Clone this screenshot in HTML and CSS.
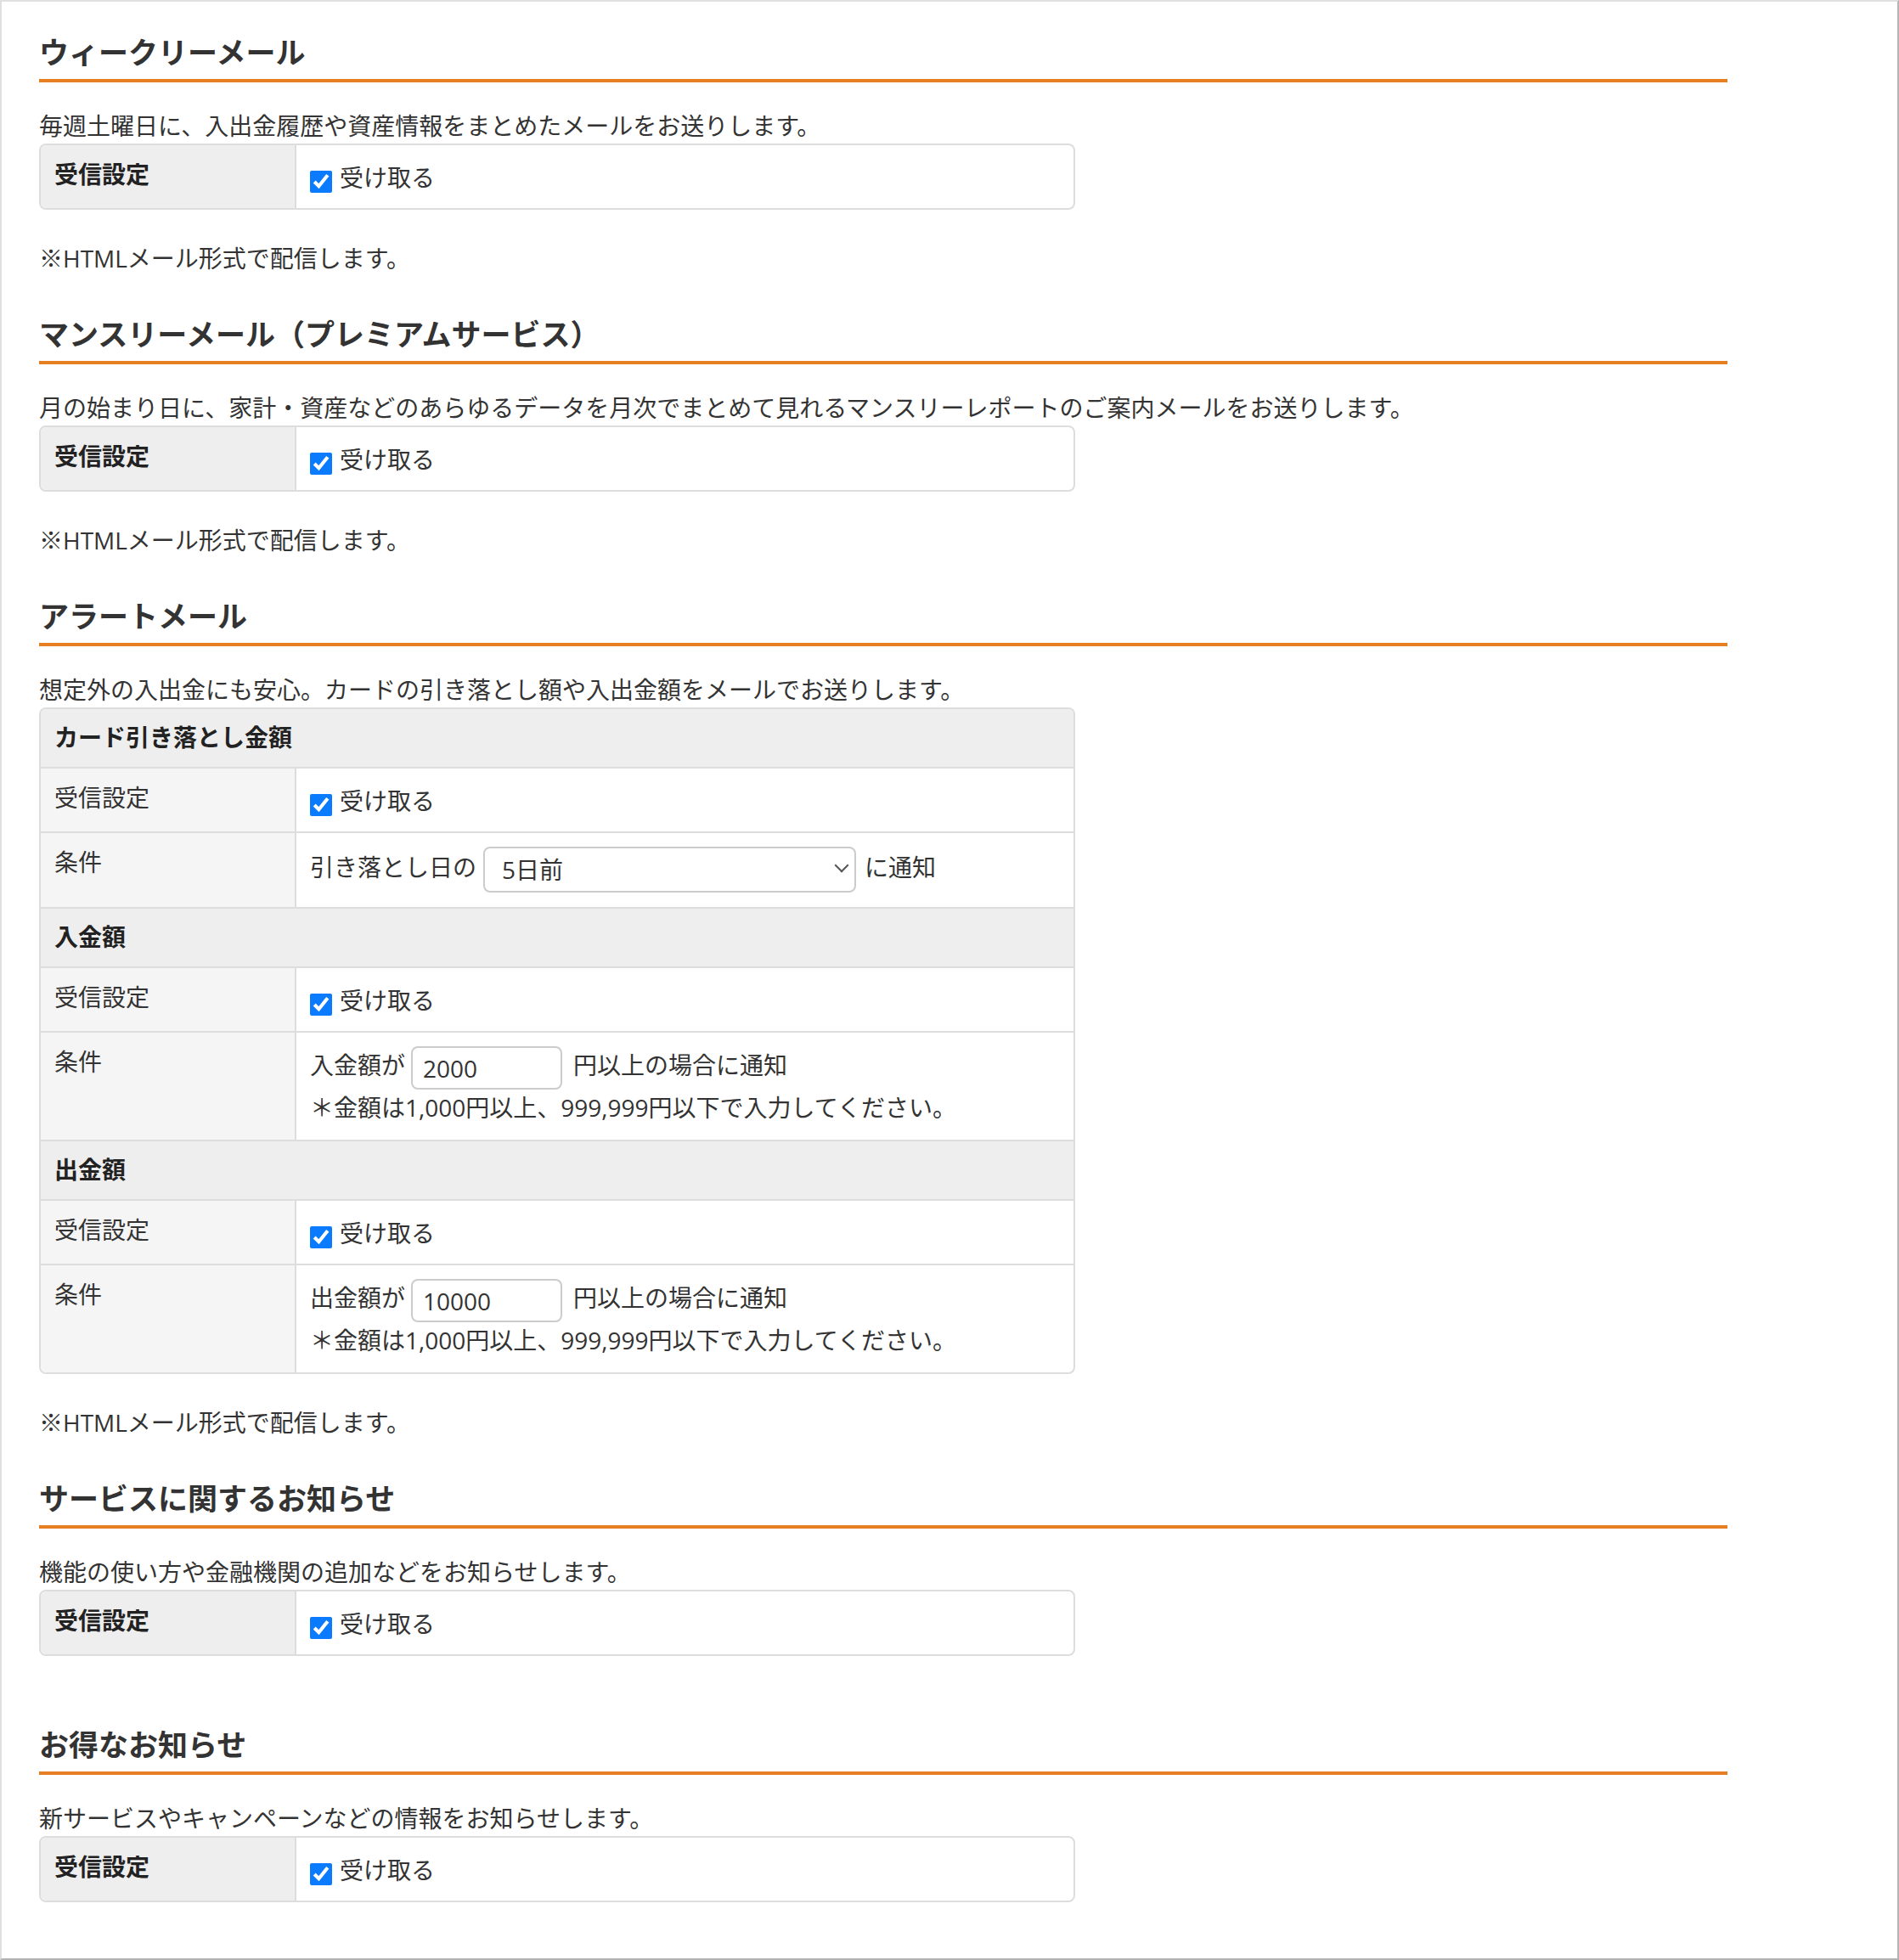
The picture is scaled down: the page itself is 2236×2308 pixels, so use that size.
FILE: index.html
```html
<!DOCTYPE html>
<html lang="ja">
<head>
    <meta charset="UTF-8">
    <meta name="viewport" content="width=device-width, initial-scale=1.0">
    <title>メール配信設定</title>
    <link rel="stylesheet" href="styles.css">
</head>

<body>
<div class="frame">
    <div class="content">

        <!-- weekly mail -->
        <section class="mail-section">
            <h2 class="section-title">ウィークリーメール</h2>
            <p class="lead">毎週土曜日に、入出金履歴や資産情報をまとめたメールをお送りします。</p>
            <div class="setting-box">
                <table class="setting-table">
                    <colgroup><col class="col-label"><col></colgroup>
                    <tr>
                        <th class="main">受信設定</th>
                        <td class="check"><label><input type="checkbox" checked>受け取る</label></td>
                    </tr>
                </table>
            </div>
            <p class="note">※HTMLメール形式で配信します。</p>
        </section>

        <!-- monthly mail -->
        <section class="mail-section">
            <h2 class="section-title">マンスリーメール（プレミアムサービス）</h2>
            <p class="lead">月の始まり日に、家計・資産などのあらゆるデータを月次でまとめて見れるマンスリーレポートのご案内メールをお送りします。</p>
            <div class="setting-box">
                <table class="setting-table">
                    <colgroup><col class="col-label"><col></colgroup>
                    <tr>
                        <th class="main">受信設定</th>
                        <td class="check"><label><input type="checkbox" checked>受け取る</label></td>
                    </tr>
                </table>
            </div>
            <p class="note">※HTMLメール形式で配信します。</p>
        </section>

        <!-- alert mail -->
        <section class="mail-section">
            <h2 class="section-title">アラートメール</h2>
            <p class="lead">想定外の入出金にも安心。カードの引き落とし額や入出金額をメールでお送りします。</p>
            <div class="setting-box">
                <table class="setting-table">
                    <colgroup><col class="col-label"><col></colgroup>
                    <tr>
                        <td class="group" colspan="2">カード引き落とし金額</td>
                    </tr>
                    <tr>
                        <th>受信設定</th>
                        <td class="check"><label><input type="checkbox" checked>受け取る</label></td>
                    </tr>
                    <tr>
                        <th>条件</th>
                        <td class="cond-select">引き落とし日の<span class="select-wrap"><select>
                            <option>1日前</option>
                            <option>3日前</option>
                            <option selected>5日前</option>
                            <option>7日前</option>
                        </select></span>に通知</td>
                    </tr>
                    <tr>
                        <td class="group" colspan="2">入金額</td>
                    </tr>
                    <tr>
                        <th>受信設定</th>
                        <td class="check"><label><input type="checkbox" checked>受け取る</label></td>
                    </tr>
                    <tr>
                        <th>条件</th>
                        <td class="cond-amount">入金額が<input type="text" class="amount" value="2000">円以上の場合に通知<br>
                            ＊金額は1,000円以上、999,999円以下で入力してください。</td>
                    </tr>
                    <tr>
                        <td class="group" colspan="2">出金額</td>
                    </tr>
                    <tr>
                        <th>受信設定</th>
                        <td class="check"><label><input type="checkbox" checked>受け取る</label></td>
                    </tr>
                    <tr>
                        <th>条件</th>
                        <td class="cond-amount">出金額が<input type="text" class="amount" value="10000">円以上の場合に通知<br>
                            ＊金額は1,000円以上、999,999円以下で入力してください。</td>
                    </tr>
                </table>
            </div>
            <p class="note">※HTMLメール形式で配信します。</p>
        </section>

        <!-- service news -->
        <section class="mail-section">
            <h2 class="section-title">サービスに関するお知らせ</h2>
            <p class="lead">機能の使い方や金融機関の追加などをお知らせします。</p>
            <div class="setting-box">
                <table class="setting-table">
                    <colgroup><col class="col-label"><col></colgroup>
                    <tr>
                        <th class="main">受信設定</th>
                        <td class="check"><label><input type="checkbox" checked>受け取る</label></td>
                    </tr>
                </table>
            </div>
        </section>

        <!-- campaign news -->
        <section class="mail-section">
            <h2 class="section-title">お得なお知らせ</h2>
            <p class="lead">新サービスやキャンペーンなどの情報をお知らせします。</p>
            <div class="setting-box">
                <table class="setting-table">
                    <colgroup><col class="col-label"><col></colgroup>
                    <tr>
                        <th class="main">受信設定</th>
                        <td class="check"><label><input type="checkbox" checked>受け取る</label></td>
                    </tr>
                </table>
            </div>
        </section>

    </div>
</div>
</body>
</html>
```

FILE: styles.css
```css
body {
    margin: 0;
    font-family: "Open Sans", "Noto Sans CJK JP", sans-serif;
    font-size: 28px;
    line-height: 42px;
    color: #333;
    background-color: #fff;
}
.frame {
    box-sizing: border-box;
    width: 2236px;
    height: 2308px;
    border-style: solid;
    border-width: 2px;
    border-color: #e0e0e0 #b4b4b4 #b4b4b4 #e0e0e0;
    padding: 34px 0 0 44px;
    overflow: hidden;
}
.content {
    width: 1988px;
}
.mail-section {
    padding-bottom: 43px;
}
.section-title {
    margin: 0;
    font-size: 35px;
    line-height: 52px;
    font-weight: bold;
    color: #333;
    padding-bottom: 5px;
    border-bottom: 4px solid #e67e22;
}
.lead {
    margin: 30px 0 0;
}
.note {
    margin: 0;
}

/* setting tables */
.setting-box {
    box-sizing: border-box;
    width: 1220px;
    border: 2px solid #ddd;
    border-radius: 8px;
    overflow: hidden;
    margin-bottom: 36px;
}
.setting-table {
    width: 100%;
    table-layout: fixed;
    border-collapse: separate;
    border-spacing: 0;
}
.col-label {
    width: 299px;
}
.setting-table th,
.setting-table td {
    padding: 16px;
    text-align: left;
    vertical-align: top;
}
.setting-table th {
    padding: 13px 16px 19px;
    font-weight: normal;
    background-color: #f5f5f5;
}
.setting-table tr + tr > th,
.setting-table tr + tr > td {
    border-top: 2px solid #ddd;
}
.setting-table th.main {
    font-weight: bold;
    color: #222;
    background-color: #eee;
}
.setting-table td {
    border-left: 2px solid #ddd;
}
.setting-table td.group {
    border-left: none;
    padding: 12px 16px 14px;
    font-weight: bold;
    color: #222;
    background-color: #eee;
}
.setting-table td.check {
    padding: 17px 16px 15px;
}
.setting-table td.cond-select {
    padding-bottom: 17px;
}
.setting-table td.cond-amount {
    padding-bottom: 17px;
}
.check input {
    width: 26px;
    height: 26px;
    margin: 0 9px 0 0;
    vertical-align: -7px;
    accent-color: #0a7aff;
}

/* form controls */
.select-wrap {
    position: relative;
    display: inline-block;
    vertical-align: middle;
    margin: 0 10px 0 8px;
}
.select-wrap select {
    display: block;
    -webkit-appearance: none;
    appearance: none;
    box-sizing: border-box;
    width: 439px;
    height: 54px;
    padding: 0 40px 0 20px;
    border: 2px solid #ccc;
    border-radius: 8px;
    background-color: #fff;
    font-family: inherit;
    font-size: 28px;
    color: #333;
}
.select-wrap::after {
    content: "";
    position: absolute;
    right: 11px;
    top: 16px;
    width: 10px;
    height: 10px;
    border-right: 2px solid #555;
    border-bottom: 2px solid #555;
    transform: rotate(45deg);
    pointer-events: none;
}
.amount {
    box-sizing: border-box;
    width: 178px;
    height: 51px;
    margin: 0 13px 0 7px;
    padding: 0 12px;
    vertical-align: middle;
    border: 2px solid #ccc;
    border-radius: 8px;
    font-family: inherit;
    font-size: 28px;
    color: #333;
}
```
